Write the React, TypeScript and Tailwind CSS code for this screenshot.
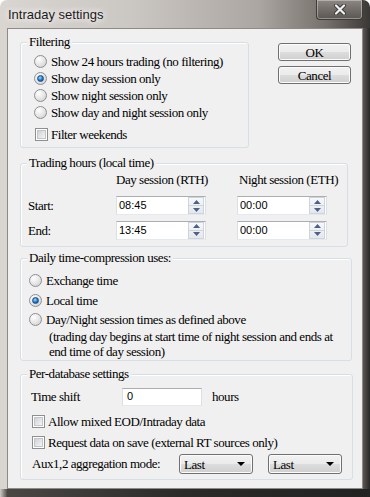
import React from 'react';

const serif = "[font-family:'Liberation_Serif',serif] text-[13px] tracking-[-0.45px] text-black";
const sans = "[font-family:'Liberation_Sans',Arial,sans-serif] tracking-normal";

const Radio: React.FC<{ checked?: boolean; label: string; row: string }> = ({ checked, label, row }) => (
  <div className={`flex items-center gap-[4px] whitespace-nowrap ${row}`}>
    <span className="w-[13px] h-[13px] rounded-full border border-[#8e8f8f] bg-[radial-gradient(circle_at_35%_30%,#ffffff,#e4e4e4_55%,#c9c9c9)] flex items-center justify-center">
      {checked && (
        <span className="w-[7px] h-[7px] rounded-full bg-[radial-gradient(circle_at_40%_35%,#a6dcff,#1f7fd6_50%,#0b3f80)] border border-[#1c4e86]" />
      )}
    </span>
    <span className="leading-none">{label}</span>
  </div>
);

const Check: React.FC<{ label: string; row: string }> = ({ label, row }) => (
  <div className={`flex items-center gap-[3px] whitespace-nowrap ${row}`}>
    <span className="w-[13px] h-[13px] border border-[#8e8f8f] bg-white p-[1px]">
      <span className="block w-full h-full border border-[#c2c5ca] bg-gradient-to-br from-[#cfd2d6] to-[#f5f5f5]" />
    </span>
    <span className="leading-none">{label}</span>
  </div>
);

const Group: React.FC<{ label: string; className: string; children: React.ReactNode }> = ({ label, className, children }) => (
  <div className={`relative border border-[#d5dfe5] rounded-[3px] shadow-[inset_1px_1px_0_#ffffff] ${className}`}>
    <span className="absolute left-[6px] -top-[8px] bg-[#f0f0f0] px-[2px] leading-[14px] whitespace-nowrap">{label}</span>
    {children}
  </div>
);

const Button: React.FC<{ label: string }> = ({ label }) => (
  <div className="w-[73px] h-[18px] rounded-[3px] border border-[#707070] bg-[linear-gradient(#f2f2f2_0%,#ebebeb_50%,#dddddd_51%,#cfcfcf_100%)] shadow-[inset_0_0_0_1px_#fcfcfc] flex items-center justify-center leading-none">
    {label}
  </div>
);

const Arrow: React.FC<{ up?: boolean }> = ({ up }) => (
  <svg width="7" height="4" viewBox="0 0 7 4">
    {up ? <path d="M0 4 L3.5 0 L7 4 Z" fill="#4d6185" /> : <path d="M0 0 L3.5 4 L7 0 Z" fill="#4d6185" />}
  </svg>
);

const SpinInput: React.FC<{ value: string }> = ({ value }) => (
  <div className="w-[90px] h-[19px] border border-[#abadb3] border-b-[#e3e9ef] border-x-[#dbdfe6] bg-white flex items-center">
    <span className={`${sans} text-[11px] pl-[2px] flex-1 leading-none`}>{value}</span>
    <div className="w-[16px] h-[17px] mr-[1px] flex flex-col border border-[#cfd4db] bg-[linear-gradient(#f6f8fa,#e4e8ee)]">
      <div className="flex-1 flex items-center justify-center border-b border-[#cfd4db]">
        <Arrow up />
      </div>
      <div className="flex-1 flex items-center justify-center">
        <Arrow />
      </div>
    </div>
  </div>
);

const Select: React.FC<{ w: string }> = ({ w }) => (
  <div className={`${w} h-[20px] rounded-[3px] border border-[#707070] bg-[linear-gradient(#f2f2f2_0%,#ebebeb_50%,#dddddd_51%,#cfcfcf_100%)] shadow-[inset_0_0_0_1px_#fcfcfc] flex items-center justify-between pl-[4px] pr-[7px]`}>
    <span className="leading-none">Last</span>
    <svg width="8" height="4" viewBox="0 0 8 4">
      <path d="M0 0 L8 0 L4 4 Z" fill="#000" />
    </svg>
  </div>
);

export default function App() {
  return (
    <div className={`w-[370px] h-[497px] rounded-t-[7px] overflow-hidden flex flex-col bg-[linear-gradient(90deg,#d9d5d1_0%,#cbc7c3_35%,#aba6a1_70%,#77716c_88%,#3a3836_100%)] ${serif}`}>
      <div className="h-[28px] flex justify-between items-start">
        <span className={`${sans} text-[13px] text-[#1b1b1b] ml-[8px] mt-[7px] leading-[16px] [text-shadow:0_0_6px_#ffffff,0_0_10px_#ffffff]`}>
          Intraday settings
        </span>
        <div className="w-[47px] h-[20px] mr-[7px] rounded-b-[4px] border border-t-0 border-[#3f3b38] bg-[linear-gradient(#8c8783,#6e6965_60%,#5a5652)] shadow-[inset_0_0_0_1px_rgba(255,255,255,0.35)] flex items-center justify-center">
          <svg width="12" height="11" viewBox="0 0 12 11">
            <path d="M2 1.5 L10 9.5 M10 1.5 L2 9.5" stroke="#3b3b3b" strokeWidth="4" strokeLinecap="round" />
            <path d="M2 1.5 L10 9.5 M10 1.5 L2 9.5" stroke="#f2f2f2" strokeWidth="2.2" strokeLinecap="round" />
          </svg>
        </div>
      </div>
      <div className="flex flex-1">
        <div className="w-[7px]" />
        <div className="w-[356px] h-[461px] bg-[#f0f0f0] border border-[#8f8a86] pl-[12px] pt-[13px] flex flex-col">
          <div className="flex">
            <Group label="Filtering" className="w-[229px] h-[106px] pt-[10px] pl-[13px]">
              <Radio label="Show 24 hours trading (no filtering)" row="h-[17px]" />
              <Radio checked label="Show day session only" row="h-[17px]" />
              <Radio label="Show night session only" row="h-[17px]" />
              <Radio label="Show day and night session only" row="h-[17px]" />
              <div className="mt-[5px] ml-[1px]">
                <Check label="Filter weekends" row="h-[17px]" />
              </div>
            </Group>
            <div className="ml-[29px] mt-[1px] flex flex-col gap-[5px]">
              <Button label="OK" />
              <Button label="Cancel" />
            </div>
          </div>

          <Group label="Trading hours (local time)" className="mt-[15px] w-[328px] h-[84px] pt-[9px] pl-[7px]">
            <div className="grid grid-cols-[57px_90px_90px] gap-x-[31px] items-center whitespace-nowrap">
              <span />
              <span className="h-[14px] leading-[14px]">Day session (RTH)</span>
              <span className="h-[14px] leading-[14px] ml-[2px]">Night session (ETH)</span>
            </div>
            <div className="grid grid-cols-[57px_90px_90px] gap-x-[31px] gap-y-[5px] items-center mt-[9px]">
              <span>Start:</span>
              <SpinInput value="08:45" />
              <SpinInput value="00:00" />
              <span>End:</span>
              <SpinInput value="13:45" />
              <SpinInput value="00:00" />
            </div>
          </Group>

          <Group label="Daily time-compression uses:" className="mt-[11px] w-[332px] h-[103px] pt-[11px] pl-[8px]">
            <Radio label="Exchange time" row="h-[20px]" />
            <Radio checked label="Local time" row="h-[20px]" />
            <Radio label="Day/Night session times as defined above" row="h-[19px]" />
            <p className="ml-[20px] leading-[15px] whitespace-nowrap">
              (trading day begins at start time of night session and ends at
              <br />
              end time of day session)
            </p>
          </Group>

          <Group label="Per-database settings" className="mt-[13px] w-[333px] h-[106px] pt-[12px] pl-[11px]">
            <div className="flex items-center h-[19px]">
              <span className="w-[91px] -ml-[1px]">Time shift</span>
              <div className="w-[80px] h-[18px] border border-[#abadb3] border-b-[#e3e9ef] border-x-[#dbdfe6] bg-white flex items-center pl-[4px]">
                <span className={`${sans} text-[11px] leading-none`}>0</span>
              </div>
              <span className="ml-[10px]">hours</span>
            </div>
            <div className="mt-[5px]">
              <Check label="Allow mixed EOD/Intraday data" row="h-[21px]" />
              <Check label="Request data on save (external RT sources only)" row="h-[21px]" />
            </div>
            <div className="flex items-center h-[20px] mt-[1px]">
              <span className="w-[147px] whitespace-nowrap">Aux1,2 aggregation mode:</span>
              <Select w="w-[74px]" />
              <div className="w-[15px]" />
              <Select w="w-[74px]" />
            </div>
          </Group>
        </div>
        <div className="w-[7px] bg-[linear-gradient(90deg,#5a5653,#2a2928)]" />
      </div>
      <div className="h-[8px] bg-[linear-gradient(90deg,#cfcac6_0%,#4a4745_2%,#2b2a29_50%,#222_100%)]" />
    </div>
  );
}
